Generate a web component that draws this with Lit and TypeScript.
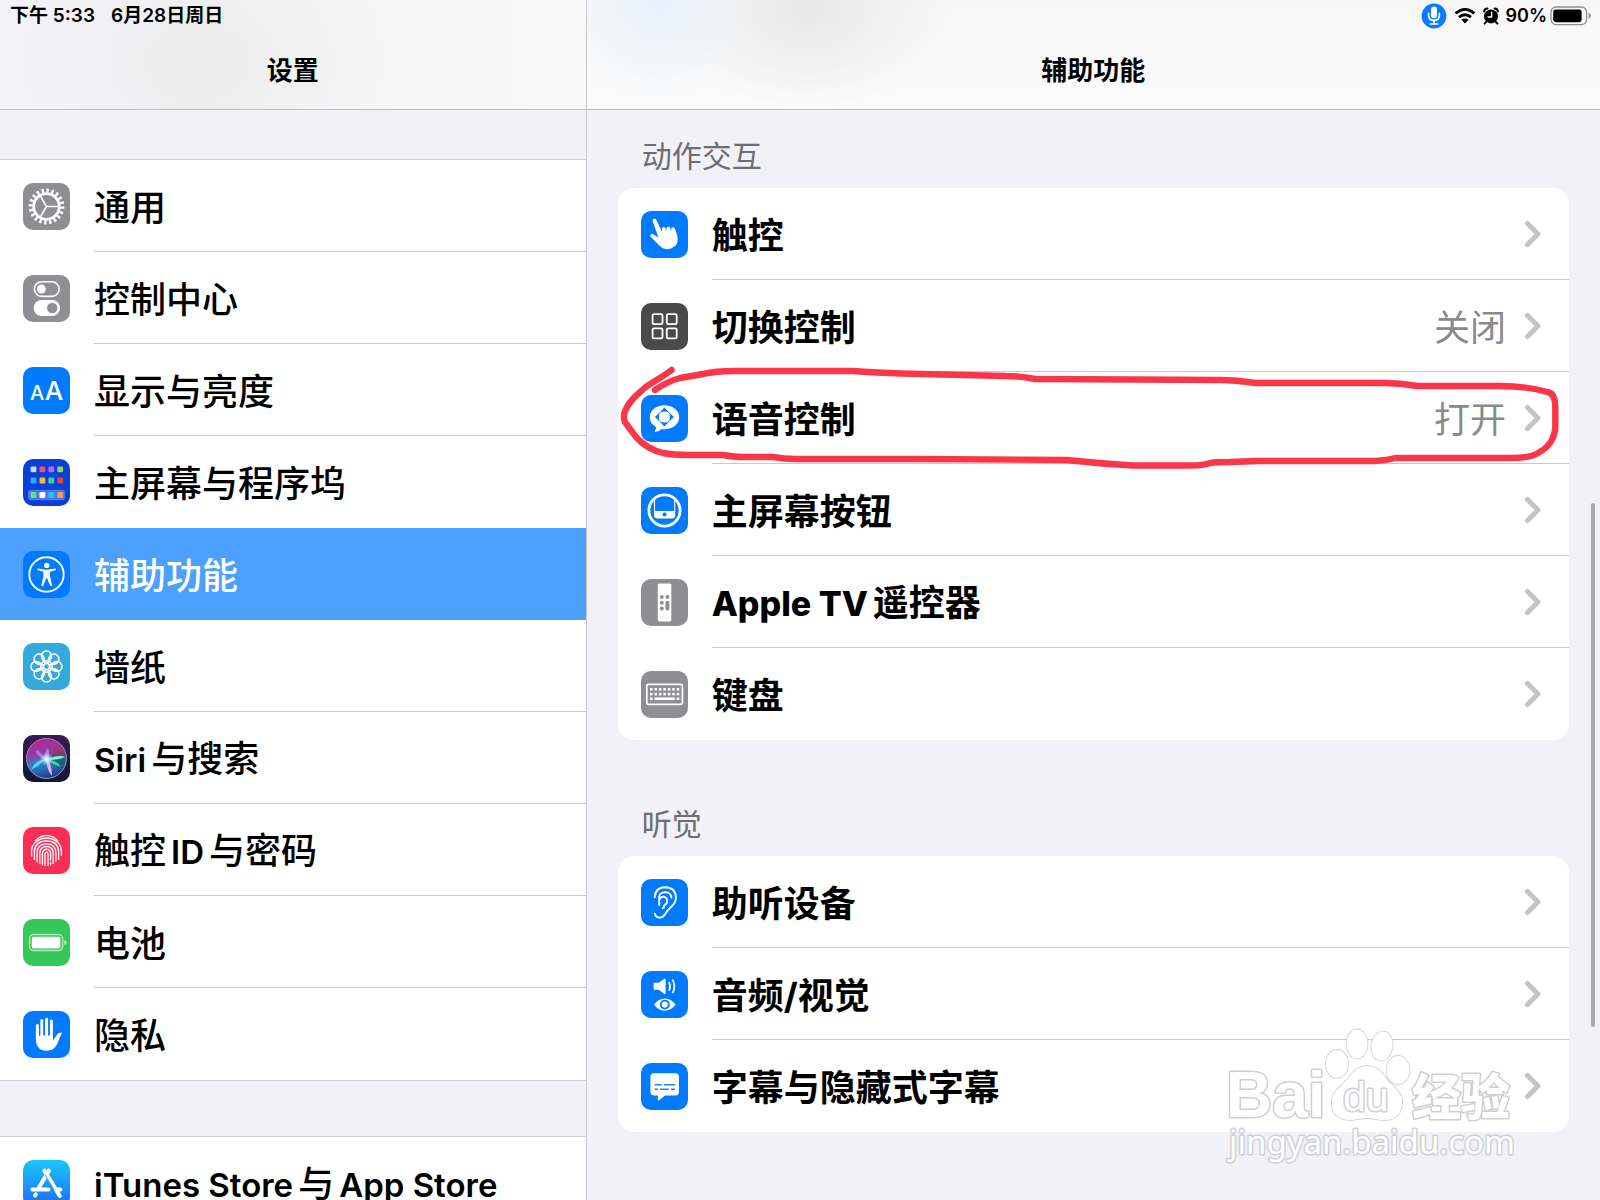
import { LitElement, html, svg, css, nothing } from "lit";
import type { SVGTemplateResult, TemplateResult } from "lit";
import { customElement, property } from "lit/decorators.js";
import { classMap } from "lit/directives/class-map.js";

type Part = string | { latin: string };

interface Item {
  id: string;
  icon: string;
  label: Part[];
  value?: string;
  selected?: boolean;
}

interface Section {
  title: string;
  items: Item[];
  marked?: boolean;
}

const BLUE = "#007aff";
const GREY = "#8e8e93";

const tile = (fill: string) => svg`<rect width="47" height="47" rx="10" fill=${fill}></rect>`;

const APP_COLORS = [
  ["#d5d8e0", "#f2506e", "#a96bff", "#9ed455"],
  ["#1fb4f5", "#fdb92c", "#34cf9c", "#f0433a"],
  ["#5fe477", "#ffffff", "#22c1fb", "#f79a4f"],
];

const ICONS: Record<string, SVGTemplateResult> = {
  gear: svg`${tile(GREY)}
    <g fill="none" stroke="#fff">
      <circle cx="23.5" cy="23.5" r="15.8" stroke-width="4.2" pathLength="40" stroke-dasharray="0.95 1.05"></circle>
      <circle cx="23.5" cy="23.5" r="12.8" stroke-width="2.8"></circle>
      <path d="M23.5 23.5H36M23.5 23.5L17.2 12.6M23.5 23.5L17.2 34.4" stroke-width="1.6"></path>
    </g>`,
  toggles: svg`${tile(GREY)}
    <rect x="11.4" y="6.8" width="24.8" height="14.6" rx="7.3" fill="none" stroke="#fff" stroke-width="1.6"></rect>
    <circle cx="18.4" cy="14.1" r="4.5" fill="#fff"></circle>
    <rect x="10.6" y="25" width="26.4" height="16" rx="8" fill="#fff"></rect>
    <circle cx="29.2" cy="33" r="5.2" fill=${GREY}></circle>`,
  display: svg`${tile(BLUE)}
    <g fill="#fff" font-family="Inter, sans-serif" font-weight="500" text-anchor="middle">
      <text x="14.2" y="33" font-size="20">A</text>
      <text x="31" y="33" font-size="26">A</text>
    </g>`,
  home: svg`${tile("#0a3fd8")}
    <rect x="5" y="30.8" width="37" height="10.4" rx="3" fill="#4d76e8"></rect>
    ${APP_COLORS.map((row, r) =>
      row.map(
        (c, i) => svg`<rect x=${7.6 + i * 8.9} y=${[7.4, 18.6, 33.1][r]} width="5.8" height="5.8" rx="1.2" fill=${c}></rect>`
      )
    )}`,
  access: svg`${tile(BLUE)}
    <circle cx="23.5" cy="23.5" r="17.2" fill="none" stroke="#fff" stroke-width="1.9"></circle>
    <circle cx="23.7" cy="14.4" r="2.7" fill="#fff"></circle>
    <path d="M15.4 17.4L21 18.6Q23.7 19 26.4 18.6L32 17.4Q33 17.4 33 18.4Q33 19 32.2 19.3L27 20.8V25.2L29 34.2Q29 35.2 28.2 35.3Q27.4 35.3 27.1 34.6L24 27H23.4L20.3 34.6Q20 35.3 19.2 35.3Q18.4 35.2 18.4 34.2L20.4 25.2V20.8L15.2 19.3Q14.4 19 14.4 18.4Q14.4 17.4 15.4 17.4Z" fill="#fff"></path>`,
  wallpaper: svg`${tile("#34aadc")}
    <g fill="none" stroke="#fff" stroke-width="1.5">
      ${[0, 45, 90, 135, 180, 225, 270, 315].map(
        (a) => svg`<circle cx="23.5" cy="13" r="5" transform="rotate(${a} 23.5 23.5)"></circle>
          <path d="M18.6 13.6Q19.4 18.6 23.5 20.4Q27.6 18.6 28.4 13.6" transform="rotate(${a} 23.5 23.5)" stroke-width="1.1"></path>`
      )}
      <circle cx="23.5" cy="23.5" r="3"></circle>
    </g>`,
  siri: svg`
    <defs>
      <linearGradient id="sbg" x1="0" y1="0" x2="0" y2="1"><stop offset="0" stop-color="#3c1a56"></stop><stop offset="1" stop-color="#10172f"></stop></linearGradient>
      <linearGradient id="sorb" x1="0.3" y1="0" x2="0.6" y2="1"><stop offset="0" stop-color="#b8258c"></stop><stop offset="0.35" stop-color="#8d3fa6"></stop><stop offset="0.6" stop-color="#2a86c8"></stop><stop offset="1" stop-color="#203a83"></stop></linearGradient>
      <radialGradient id="sglow"><stop offset="0" stop-color="#fff"></stop><stop offset="0.35" stop-color="#c9f4ff" stop-opacity="0.8"></stop><stop offset="1" stop-color="#6fd8ff" stop-opacity="0"></stop></radialGradient>
    </defs>
    ${tile("url(#sbg)")}
    <circle cx="23.5" cy="23.5" r="20" fill="url(#sorb)" stroke="#9b8fb5" stroke-width="1"></circle>
    <path d="M24 22Q37 13 42 18Q44 24 40 33Q34 34 24 24Z" fill="#1b5f6f" opacity="0.75"></path>
    <path d="M24 22Q31 10 37 10Q42 14 43 21Q34 20 24 23Z" fill="#b0295f" opacity="0.6"></path>
    <path d="M23 24Q12 25 8 35Q14 32 23 24Z" fill="#47d9f5"></path>
    <path d="M22 23Q14 13 13 15Q12 20 22 25Z" fill="#d26be0" opacity="0.8"></path>
    <path d="M23 24Q38 19 42 22Q36 25 24 25Z" fill="#8ff0d8"></path>
    <path d="M25 24Q36 27 38 32Q30 30 24 25Z" fill="#39d7a5"></path>
    <path d="M23 24Q24 36 29 41Q29 31 25 24Z" fill="#f7a9ef"></path>
    <path d="M22 24Q22 15 25 13Q27 18 25 24Z" fill="#e58af0" opacity="0.7"></path>
    <circle cx="23.5" cy="24" r="7" fill="url(#sglow)"></circle>`,
  touchid: svg`${tile("#fd2d55")}
    <g fill="none" stroke="#fff" stroke-width="1.35" stroke-linecap="round">
      <path d="M12.4 13.6Q17 8.6 23.5 8.6Q30 8.6 34.6 13.6"></path>
      <path d="M8.6 29V23.5Q8.8 19.4 11 16.6Q15.7 11.2 23.5 11.2Q31.3 11.2 36 16.6Q38.2 19.6 38.4 24V28"></path>
      <path d="M11.4 32.6V24.5Q12 14 23.5 14Q35 14 35.6 24.5V32.4"></path>
      <path d="M14.1 34.8V25.5Q14.6 16.8 23.5 16.8Q32.4 16.8 32.9 25.5V34.6"></path>
      <path d="M16.8 36.6V26Q17.2 19.5 23.5 19.5Q29.8 19.5 30.2 26V36.6"></path>
      <path d="M19.4 37.8V26.5Q19.8 22.2 23.5 22.2Q27.2 22.2 27.6 26.5V33M27.6 35.6V37.8"></path>
      <path d="M22 38.4V27Q22.2 25 23.5 25Q24.8 25 25 27V38.4"></path>
    </g>`,
  battery: svg`${tile("#34c759")}
    <rect x="6.6" y="15.6" width="33" height="16" rx="4" fill="none" stroke="#b3e8c0" stroke-width="1.5"></rect>
    <rect x="8.8" y="17.8" width="28.6" height="11.6" rx="2" fill="#fff"></rect>
    <path d="M41.4 21Q43.6 21.4 43.6 23.6Q43.6 25.8 41.4 26.2Z" fill="#b3e8c0"></path>`,
  hand: svg`${tile(BLUE)}
    <g stroke="#fff" stroke-linecap="round" fill="none" stroke-width="3">
      <path d="M14.4 28V14.6M18.8 26V9.6M23.6 26V8.3M28.4 26V10"></path>
    </g>
    <path d="M12.9 24H30V29.4L34.2 23.4Q35.6 21.5 38 21.4Q39.6 21.6 38.6 23.2Q37 25.4 36 28.4Q33 39.8 24 39.8Q12.9 39.8 12.9 28Z" fill="#fff"></path>
    <path d="M16.6 15V25M21.2 10V25M26 10V25" stroke=${BLUE} stroke-width="0.9"></path>`,
  appstore: svg`
    <defs><linearGradient id="abg" x1="0" y1="0" x2="0" y2="1"><stop offset="0" stop-color="#1cc7fb"></stop><stop offset="1" stop-color="#1c6cf2"></stop></linearGradient></defs>
    ${tile("url(#abg)")}
    <g fill="none" stroke="#fff" stroke-width="4" stroke-linecap="round">
      <path d="M26 10.6L15.4 28.6M21.4 10.6L36.8 36M9.4 29.6H25.6M33 29.6H37.4M12.8 34.4L12 35.6"></path>
    </g>
    <path d="M22 14.5L31 30" stroke="#1b95f7" stroke-width="0.9"></path>`,
  touch: svg`${tile(BLUE)}
    <path d="M11.7 10.2Q11.2 8.2 13 7.8Q14.7 7.4 15.5 9.2L20.4 19.4Q20.6 16.4 22.6 16Q24.4 15.9 25 17.6Q25.6 15.6 27.4 15.7Q29.2 15.8 29.8 17.8Q30.6 15.8 32.2 16.2Q34 16.7 34.4 18.8L36.4 25.6Q38.2 34.2 30.6 37.2Q23.4 40 18.4 34.6L9.8 26Q8.4 24.2 9.8 23.2Q11 22.4 12.6 23.4L17.4 26.6Z" fill="#fff"></path>
    <path d="M20.4 15.6V20M25 16.2V19.4M29.9 16.4V19.4" stroke=${BLUE} stroke-width="0.8"></path>`,
  switches: svg`${tile("#4a4a4a")}
    <g fill="none" stroke="#fff" stroke-width="1.8">
      <rect x="11.6" y="11.2" width="9.9" height="10" rx="1.4"></rect><rect x="25.8" y="11.2" width="9.9" height="10" rx="1.4"></rect>
      <rect x="11.6" y="25.4" width="9.9" height="10" rx="1.4"></rect><rect x="25.8" y="25.4" width="9.9" height="10" rx="1.4"></rect>
    </g>`,
  voice: svg`${tile(BLUE)}
    <path d="M23.4 10.2C31.8 10.2 38.2 15.4 38.2 22.2C38.2 29 31.8 34.2 23.4 34.2Q22 34.2 20.8 34Q18 36.8 14 37Q13.2 36.8 13.8 36Q15.4 34.2 14.9 31.8Q8.8 28.2 8.8 22.2C8.8 15.4 15 10.2 23.4 10.2Z" fill="#fff"></path>
    <path d="M23.4 12.4L27.2 16.6H19.6ZM23.4 31.6L27.2 27.4H19.6ZM13.8 22L18 18.2V25.8ZM33 22L28.8 18.2V25.8Z" fill=${BLUE}></path>
    <circle cx="23.4" cy="22" r="6.4" fill="none" stroke=${BLUE} stroke-width="0.9"></circle>`,
  homebutton: svg`${tile(BLUE)}
    <circle cx="23.5" cy="23.5" r="15.6" fill="none" stroke="#fff" stroke-width="2.8"></circle>
    <path d="M13.5 12V24M33.7 12V24" stroke="#fff" stroke-width="1.1"></path>
    <path d="M13 24H34.2V28.4Q34 31.4 31 31.4H16.2Q13.2 31.4 13 28.4Z" fill="#fff"></path>
    <circle cx="23.6" cy="27.4" r="2" fill=${BLUE}></circle>`,
  remote: svg`${tile(GREY)}
    <rect x="16.8" y="4.4" width="13.5" height="38" rx="1.6" fill="#fff"></rect>
    <g fill=${GREY}><circle cx="20.8" cy="18" r="2"></circle><circle cx="26.4" cy="18" r="2"></circle><circle cx="20.8" cy="23.8" r="2"></circle><circle cx="20.8" cy="29.4" r="2"></circle><rect x="24.5" y="21.8" width="3.9" height="9.8" rx="1.9"></rect></g>`,
  keyboard: svg`${tile(GREY)}
    <rect x="5.8" y="13.4" width="35.6" height="20" rx="1.6" fill="none" stroke="#fff" stroke-width="1.7"></rect>
    <g fill="#fff">
      ${[0, 1].map((r) => [0, 1, 2, 3, 4, 5, 6].map((i) => svg`<rect x=${9 + i * 4.45} y=${17 + r * 4.8} width="2.5" height="2.6"></rect>`))}
      <rect x="9" y="26.4" width="2.5" height="2.6"></rect><rect x="13.4" y="26.4" width="20.4" height="2.6"></rect><rect x="35.7" y="26.4" width="2.5" height="2.6"></rect>
    </g>`,
  ear: svg`${tile(BLUE)}
    <g fill="none" stroke="#fff" stroke-width="1.9" stroke-linecap="round" stroke-linejoin="round">
      <path d="M13.7 18.2Q14.4 8.2 24.4 8.2Q34.6 8.6 35 18.8Q34.8 23.8 30.4 27.6Q26.4 31.2 24.2 35Q22 38.8 18.2 38.6Q14.4 38.2 13.9 34.6"></path>
      <path d="M18.2 26V17.6Q18.8 13.2 24.2 13.1Q30.2 13.6 30.5 18.6"></path>
      <path d="M18.6 20.2Q19.6 17.6 22.6 17.8Q26.6 18.6 26.2 22.4Q25.8 25.4 23 26.6Q23.4 28.8 21.6 29.2"></path>
    </g>`,
  av: svg`${tile(BLUE)}
    <path d="M12.6 12.8Q12.6 11.8 13.6 11.8H17.8L23 7.9Q24.6 7 24.6 8.8V22Q24.6 23.8 23 22.8L17.8 18.8H13.6Q12.6 18.8 12.6 17.8Z" fill="#fff"></path>
    <path d="M28.2 11.6Q30.2 15.4 28.2 19.2M31.8 9.2Q35 15.4 31.8 21.6" fill="none" stroke="#fff" stroke-width="1.7" stroke-linecap="round"></path>
    <path d="M13 33.6Q17.6 27.6 23.8 27.6Q30 27.6 34.6 33.6Q30 39.8 23.8 39.8Q17.6 39.8 13 33.6Z" fill="#fff"></path>
    <circle cx="23.8" cy="33.6" r="4" fill="none" stroke=${BLUE} stroke-width="1.9"></circle>`,
  caption: svg`${tile(BLUE)}
    <path d="M13 10.2H34.4Q38 10.2 38 13.8V28.8Q38 32.4 34.4 32.4H24L17.8 37.4Q16.8 37.8 16.8 36.8V32.4H13Q9.4 32.4 9.4 28.8V13.8Q9.4 10.2 13 10.2Z" fill="#fff"></path>
    <path d="M13.6 21.8H20.8M23 21.8H34M13.6 26.2H17M19 26.2H27.8M30 26.2H34" stroke="#1f87ff" stroke-width="1.6"></path>`,
};

const SIDEBAR: Item[] = [
  { id: "general", icon: "gear", label: ["通用"] },
  { id: "control-center", icon: "toggles", label: ["控制中心"] },
  { id: "display", icon: "display", label: ["显示与亮度"] },
  { id: "home-screen", icon: "home", label: ["主屏幕与程序坞"] },
  { id: "accessibility", icon: "access", label: ["辅助功能"], selected: true },
  { id: "wallpaper", icon: "wallpaper", label: ["墙纸"] },
  { id: "siri", icon: "siri", label: [{ latin: "Siri" }, "与搜索"] },
  { id: "touch-id", icon: "touchid", label: ["触控", { latin: "ID" }, "与密码"] },
  { id: "battery", icon: "battery", label: ["电池"] },
  { id: "privacy", icon: "hand", label: ["隐私"] },
];

const STORES: Item[] = [
  { id: "stores", icon: "appstore", label: [{ latin: "iTunes Store" }, "与", { latin: "App Store" }] },
];

const SECTIONS: Section[] = [
  {
    title: "动作交互",
    marked: true,
    items: [
      { id: "touch", icon: "touch", label: ["触控"] },
      { id: "switch-control", icon: "switches", label: ["切换控制"], value: "关闭" },
      { id: "voice-control", icon: "voice", label: ["语音控制"], value: "打开" },
      { id: "home-button", icon: "homebutton", label: ["主屏幕按钮"] },
      { id: "tv-remote", icon: "remote", label: [{ latin: "Apple TV" }, "遥控器"] },
      { id: "keyboard", icon: "keyboard", label: ["键盘"] },
    ],
  },
  {
    title: "听觉",
    items: [
      { id: "hearing", icon: "ear", label: ["助听设备"] },
      { id: "audio-visual", icon: "av", label: ["音频/视觉"] },
      { id: "captions", icon: "caption", label: ["字幕与隐藏式字幕"] },
    ],
  },
];

@customElement("settings-row")
export class SettingsRow extends LitElement {
  @property({ attribute: false }) item!: Item;
  @property({ type: Boolean }) detail = false;
  @property({ type: Boolean }) last = false;

  static styles = css`
    :host {
      display: block;
    }
    .row {
      display: flex;
      align-items: center;
      height: 92px;
      padding-left: 23px;
      gap: 24px;
      color: #000;
      text-decoration: none;
      font-size: 36px;
      font-weight: 500;
      line-height: 48px;
      white-space: nowrap;
    }
    .icon {
      flex: none;
      width: 47px;
      height: 47px;
    }
    .body {
      flex: 1;
      min-width: 0;
      height: 100%;
      box-sizing: border-box;
      display: flex;
      align-items: center;
      border-bottom: 1px solid #c9c9cc;
    }
    .plain .body {
      border-bottom-color: transparent;
    }
    .label {
      flex: 1;
    }
    .label,
    .value {
      padding-top: 4px;
    }
    .latin {
      font-size: 33px;
      font-weight: 600;
    }
    .latin.before {
      margin-right: 5px;
    }
    .latin.after {
      margin-left: 5px;
    }
    .selected {
      background: #4ca1ff;
      color: #fff;
    }
    .detail {
      font-weight: 700;
    }
    .detail .latin {
      font-size: 34px;
      font-weight: 800;
    }
    .value {
      color: #8a8a8e;
      font-weight: 400;
      margin-right: 18px;
    }
    .chevron {
      flex: none;
      width: 18px;
      height: 28px;
      margin-right: 27px;
    }
  `;

  private renderLabel(): TemplateResult[] {
    const parts = this.item.label;
    return parts.map((p, i) =>
      typeof p === "string"
        ? html`${p}`
        : html`<span class=${classMap({ latin: true, before: i < parts.length - 1, after: i > 0 })}>${p.latin}</span>`
    );
  }

  render() {
    const { item } = this;
    const classes = { row: true, detail: this.detail, selected: !!item.selected, plain: this.last || !!item.selected };
    return html`<a class=${classMap(classes)} href="#${item.id}" aria-current=${item.selected ? "page" : nothing}>
      <svg class="icon" viewBox="0 0 47 47" aria-hidden="true">${ICONS[item.icon]}</svg>
      <span class="body">
        <span class="label">${this.renderLabel()}</span>
        ${item.value ? html`<span class="value">${item.value}</span>` : nothing}
        ${this.detail
          ? html`<svg class="chevron" viewBox="0 0 18 28" aria-hidden="true">
              <path d="M3.5 3.5L14 14L3.5 24.5" fill="none" stroke="#c4c4c7" stroke-width="5" stroke-linecap="round" stroke-linejoin="round"></path>
            </svg>`
          : nothing}
      </span>
    </a>`;
  }
}

@customElement("app-root")
export class AppRoot extends LitElement {
  static styles = css`
    :host {
      display: block;
      font-family: Inter, "Noto Sans CJK SC", sans-serif;
      color: #000;
    }
    .app {
      display: grid;
      grid-template-columns: minmax(0, 11fr) minmax(0, 19fr);
      height: 100vh;
      background: #f2f1f7;
    }
    .pane {
      position: relative;
      display: flex;
      flex-direction: column;
      min-height: 0;
    }
    .side {
      border-right: 1px solid #c8c8cc;
    }
    .head {
      flex: none;
      box-sizing: border-box;
      height: 110px;
      display: flex;
      flex-direction: column;
      border-bottom: 1px solid #bfbfc3;
    }
    .side .head {
      background: radial-gradient(ellipse 190px 150px at 200px 62px, #ececec, rgba(240, 240, 240, 0)),
        linear-gradient(90deg, #f3f2f9, #f6f6f7 60%, #f8f8f9);
    }
    .main .head {
      background: radial-gradient(ellipse 90px 100px at 70px 0, #e6f1fb, rgba(240, 246, 252, 0)),
        radial-gradient(ellipse 140px 100px at 220px 10px, #e8e8e8, rgba(245, 245, 245, 0)),
        linear-gradient(#f7f7f8, #fbfbfb);
    }
    .status {
      display: flex;
      align-items: center;
      height: 31px;
      font-size: 19px;
      font-weight: 600;
      line-height: 24px;
    }
    .side .status {
      padding-left: 10px;
      gap: 16px;
    }
    .main .status {
      justify-content: flex-end;
      padding-right: 8px;
      gap: 7px;
    }
    .power {
      display: flex;
      align-items: center;
      gap: 3px;
      font-size: 18px;
    }
    .title {
      margin: 0;
      padding-top: 20px;
      text-align: center;
      font-size: 26px;
      font-weight: 600;
      line-height: 40px;
    }
    .scroll {
      flex: 1;
      min-height: 0;
      overflow: auto;
      scrollbar-width: none;
    }
    .group {
      background: #fff;
      border-top: 1px solid #d0d0d4;
      border-bottom: 1px solid #d0d0d4;
      margin-bottom: 55px;
    }
    .list {
      list-style: none;
      margin: 0;
      padding: 0;
    }
    .side .scroll {
      padding-top: 49px;
    }
    .main .scroll {
      padding: 26px 31px 0;
    }
    .section {
      margin-bottom: 64px;
    }
    .heading {
      margin: 0;
      padding: 0 0 12px 24px;
      color: #6d6d72;
      font-size: 30px;
      font-weight: 400;
      line-height: 40px;
    }
    .card {
      position: relative;
      background: #fff;
      border-radius: 16px;
    }
    .ink {
      position: absolute;
      left: 0;
      top: 170px;
      width: 100%;
      height: 120px;
      overflow: visible;
      pointer-events: none;
    }
    .thumb {
      position: absolute;
      right: 5px;
      top: 503px;
      width: 4px;
      height: 524px;
      border-radius: 2px;
      background: #a9a9ae;
    }
    .mark {
      position: absolute;
      right: 80px;
      bottom: 30px;
      width: 300px;
      height: 145px;
      pointer-events: none;
    }
    .glyph {
      flex: none;
    }
  `;

  private renderList(items: Item[], detail = false) {
    return html`<ul class="list">
      ${items.map(
        (item, i) => html`<li>
          <settings-row .item=${item} .detail=${detail} .last=${i === items.length - 1 || !!items[i + 1]?.selected}></settings-row>
        </li>`
      )}
    </ul>`;
  }

  private renderInk() {
    return html`<svg class="ink" viewBox="0 0 951 120" preserveAspectRatio="none" aria-hidden="true">
      <path
        transform="translate(-618 -358)"
        d="M671.5 370Q665 375 655 381Q646 386 640 392Q631 400 627 407Q622 416 625 422Q629 428 637 438Q647 449 663 453Q673 455 690 455H723Q735 457 743 457H773Q785 459 795 459H920L1066 460Q1105 464 1133 465.5H1190Q1203 465.5 1210 463Q1216 462 1230 462L1257 461H1374Q1384 461 1395 458H1511Q1528 458 1536 454Q1549 447 1552 439Q1555 433 1555 426V408Q1555 393 1547 392Q1526 386 1500 386H1417Q1400 383 1384 383H1255Q1235 380 1220 380L1035 379Q1020 376 1005 376L920 374Q880 373 853 371H735Q715 371 703 374L680 378Q668 381 655 390"
        fill="none" stroke="#fa3648" stroke-width="6.4" stroke-linecap="round" stroke-linejoin="round"></path>
    </svg>`;
  }

  private renderWatermark() {
    return html`<svg class="mark" viewBox="0 0 300 145" role="img" aria-label="Baidu 经验">
      <g fill="#fff" stroke="#d2d2d5" stroke-width="1.8" paint-order="stroke">
        <ellipse cx="117" cy="39" rx="11" ry="14"></ellipse>
        <ellipse cx="137" cy="19" rx="10.5" ry="14.5"></ellipse>
        <ellipse cx="162" cy="21" rx="10.5" ry="14.5" transform="rotate(8 162 21)"></ellipse>
        <ellipse cx="178" cy="45" rx="11.5" ry="14"></ellipse>
        <path d="M147 41C160 41 164 52 171 59C180 67 183 72 182 80C180 92 173 95 164 95C157 95 153 93 147 93C141 93 138 95 130 95C121 95 113 91 112 80C111 71 115 66 122 60C130 53 134 41 147 41Z"></path>
      </g>
      <g fill="#fff" stroke="#cfcfd3" stroke-width="3" paint-order="stroke" stroke-linejoin="round">
        <text x="6" y="92" font-family="Liberation Sans, sans-serif" font-weight="700" font-size="64">Bai</text>
        <text x="123" y="86" font-family="Liberation Sans, sans-serif" font-size="41">du</text>
        <text x="192" y="90" font-family="Noto Sans CJK SC, sans-serif" font-weight="900" font-size="49">经验</text>
        <text x="9" y="129" font-family="Noto Sans, sans-serif" font-size="33">jingyan.baidu.com</text>
      </g>
    </svg>`;
  }

  render() {
    return html`<div class="app">
      <nav class="pane side" aria-label="设置">
        <header class="head">
          <div class="status"><span>下午 5:33</span><span>6月28日周日</span></div>
          <h1 class="title">设置</h1>
        </header>
        <div class="scroll">
          <div class="group">${this.renderList(SIDEBAR)}</div>
          <div class="group">${this.renderList(STORES)}</div>
        </div>
      </nav>
      <main class="pane main">
        <header class="head">
          <div class="status">
            <svg class="glyph" width="26" height="26" viewBox="0 0 26 26" aria-hidden="true">
              <circle cx="13" cy="13" r="12.4" fill="#0a7bff"></circle>
              <rect x="10" y="3.6" width="6" height="11.6" rx="3" fill="#fff"></rect>
              <path d="M7.6 10.4V12.6Q7.8 17.2 13 17.4Q18.2 17.2 18.4 12.6V10.4M13 17.4V20.6M9.2 21H16.8" fill="none" stroke="#fff" stroke-width="1.6" stroke-linecap="round"></path>
            </svg>
            <svg class="glyph" width="22" height="18" viewBox="0 0 22 18" aria-hidden="true">
              <path d="M1.6 6.4Q11 -1.6 20.4 6.4M5 10.2Q11 5.2 17 10.2" fill="none" stroke="#000" stroke-width="2.8"></path>
              <path d="M7.4 12.8Q11 10.2 14.6 12.8L11 16.6Z" fill="#000"></path>
            </svg>
            <svg class="glyph" width="16" height="18" viewBox="0 0 16 18" aria-hidden="true">
              <circle cx="8" cy="9.4" r="7" fill="#000"></circle>
              <path d="M1.2 4.4Q1.4 1.6 4.4 1.6M14.8 4.4Q14.6 1.6 11.6 1.6M3 15L1.6 16.6M13 15L14.4 16.6" stroke="#000" stroke-width="2" fill="none" stroke-linecap="round"></path>
              <path d="M8.6 4.8V10H4.6" stroke="#fff" stroke-width="1.4" fill="none"></path>
            </svg>
            <span class="power">
              <span>90%</span>
              <svg class="glyph" width="42" height="20" viewBox="0 0 42 20" aria-hidden="true">
                <rect x="1" y="1" width="35.6" height="17.6" rx="5" fill="none" stroke="#8f8f92" stroke-width="1.3"></rect>
                <rect x="3.2" y="3.4" width="28.4" height="12.8" rx="2.4" fill="#000"></rect>
                <path d="M38.6 6.8Q41 7.6 41 9.8Q41 12 38.6 12.8Z" fill="#8f8f92"></path>
              </svg>
            </span>
          </div>
          <h2 class="title">辅助功能</h2>
        </header>
        <div class="scroll">
          ${SECTIONS.map(
            (s) => html`<section class="section">
              <h3 class="heading">${s.title}</h3>
              <div class="card">${this.renderList(s.items, true)}${s.marked ? this.renderInk() : nothing}</div>
            </section>`
          )}
        </div>
        <div class="thumb"></div>
        ${this.renderWatermark()}
      </main>
    </div>`;
  }
}
